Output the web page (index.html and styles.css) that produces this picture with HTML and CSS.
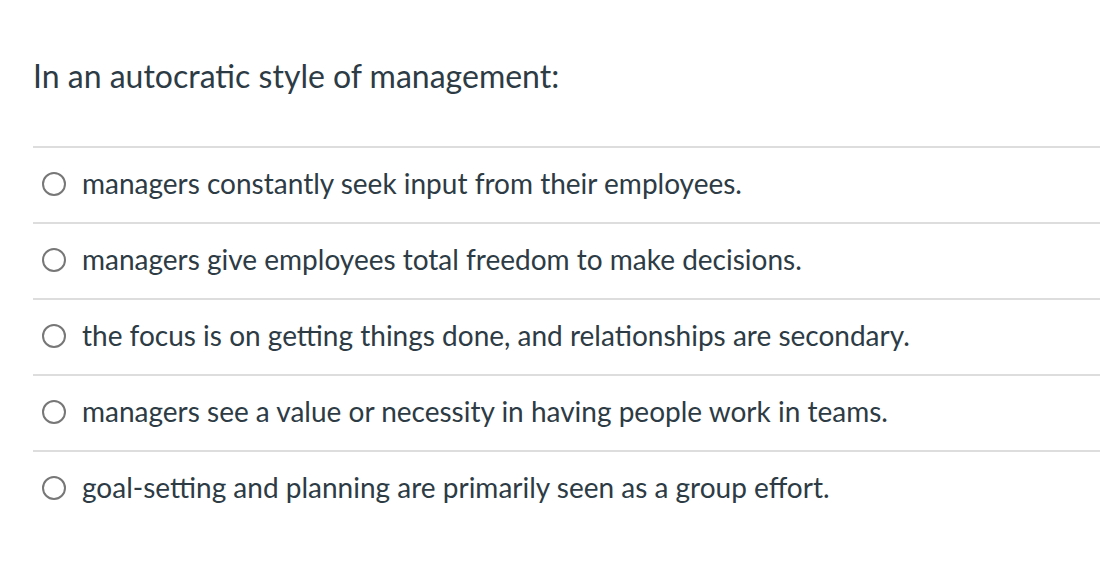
FILE: index.html
```html
<!DOCTYPE html>
<html>
<head>
<meta charset="utf-8">
<link rel="stylesheet" href="styles.css">
</head>
<body>
<div class="question">
  <div class="question-text">In an autocratic style of management:</div>
  <div class="answers">
    <label class="answer"><span class="radio"></span><span class="answer-text">managers constantly seek input from their employees.</span></label>
    <label class="answer"><span class="radio"></span><span class="answer-text">managers give employees total freedom to make decisions.</span></label>
    <label class="answer"><span class="radio"></span><span class="answer-text">the focus is on getting things done, and relationships are secondary.</span></label>
    <label class="answer"><span class="radio"></span><span class="answer-text">managers see a value or necessity in having people work in teams.</span></label>
    <label class="answer"><span class="radio"></span><span class="answer-text">goal-setting and planning are primarily seen as a group effort.</span></label>
  </div>
</div>
</body>
</html>
```

FILE: styles.css
```css
html, body {
  margin: 0;
  padding: 0;
  background: #ffffff;
}
body {
  font-family: Lato, "Noto Sans", sans-serif;
  color: #2d3b45;
}
.question {
  padding: 0 20px 0 33px;
}
.question-text {
  font-size: 32px;
  line-height: 38px;
  padding-top: 57px;
  height: 89px;
}
.answers {
  border-top: 2px solid #dddddd;
}
.answer {
  display: flex;
  align-items: center;
  height: 74px;
  border-bottom: 2px solid #dddddd;
  padding-left: 9px;
}
.answer:last-child {
  border-bottom: none;
}
.radio {
  width: 20px;
  height: 20px;
  border: 2px solid #777777;
  border-radius: 50%;
  flex: none;
  margin-right: 16px;
  margin-bottom: 3px;
}
.answer-text {
  font-size: 28px;
  line-height: 34px;
  margin-bottom: 4px;
}
```
